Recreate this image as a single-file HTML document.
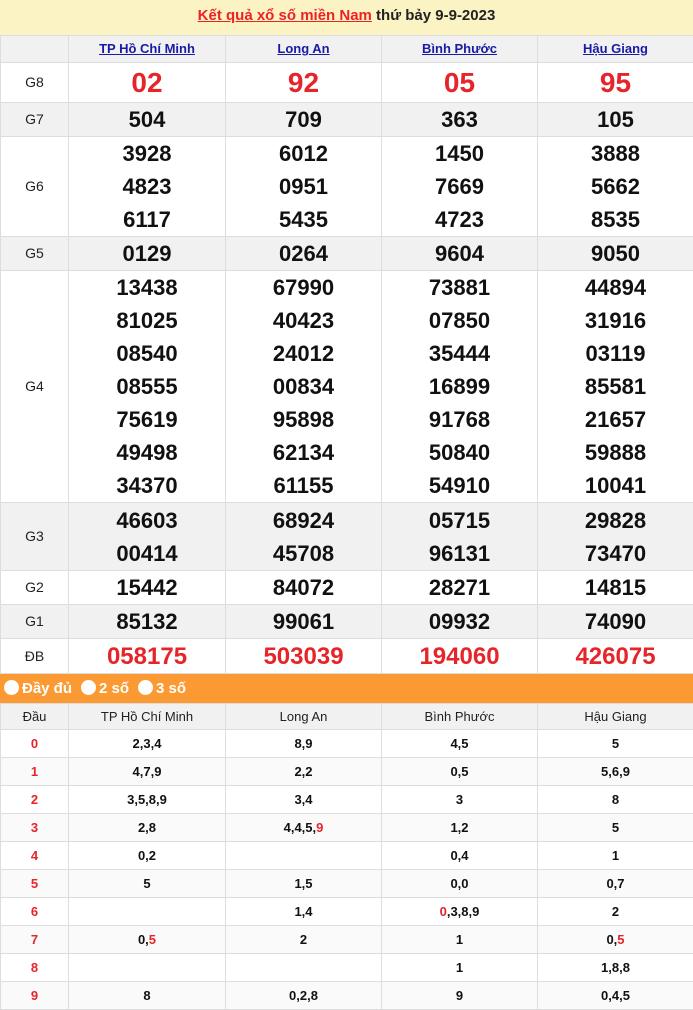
<!DOCTYPE html><html><head><meta charset="utf-8"><style>
*{margin:0;padding:0;box-sizing:border-box}
body{width:693px;height:1008px;overflow:hidden;background:#fff;font-family:"Liberation Sans",Arial,sans-serif}
.hd{height:35px;background:#fcf3c5;text-align:center;font-weight:bold;font-size:15px;line-height:32px;color:#222}
.hd a{color:#e22;text-decoration:underline}
table{border-collapse:collapse;width:693px;table-layout:fixed}
td{border:1px solid #ddd;text-align:center;padding:0;vertical-align:middle}
.k td{font-weight:bold;font-size:22px;color:#111;line-height:33px}
.k td:first-child{font-weight:normal;font-size:14px;color:#222}
.g{background:#f1f1f1}
.th td{height:27px;font-size:13px;line-height:26px}
.th a{color:#1a1aa6;text-decoration:underline}
.r{color:#e5252a!important}
.big td.r{font-size:28px}
.db td.r{font-size:24px}
.bar{height:29px;background:#fb9a33;color:#fff;font-weight:bold;font-size:15px;line-height:29px;padding-left:4px}
.bar span{display:inline-block;width:15px;height:15px;border-radius:50%;background:#fff;vertical-align:-2px;margin-right:3px}
.bar b{margin-right:9px}
.l td{height:28px;font-size:13px;font-weight:bold;color:#111}
.l td:first-child{color:#e5252a;font-weight:bold}
.lh td{height:26px;font-weight:normal;font-size:13px;color:#222;background:#f1f1f1}
.l.x td{background:#fafafa}
.rd{color:#e5252a}
</style></head><body>
<div class="hd"><a>Kết quả xổ số miền Nam</a> thứ bảy 9-9-2023</div>
<table class="k">
<colgroup><col style="width:68px"><col style="width:157px"><col style="width:156px"><col style="width:156px"><col style="width:156px"></colgroup>
<tr class="th g"><td></td><td><a>TP Hồ Chí Minh</a></td><td><a>Long An</a></td><td><a>Bình Phước</a></td><td><a>Hậu Giang</a></td></tr>
<tr class="big" style="height:40px"><td>G8</td><td class="r">02</td><td class="r">92</td><td class="r">05</td><td class="r">95</td></tr>
<tr class="g" style="height:34px"><td>G7</td><td>504</td><td>709</td><td>363</td><td>105</td></tr>
<tr style="height:100px"><td>G6</td><td>3928<br>4823<br>6117</td><td>6012<br>0951<br>5435</td><td>1450<br>7669<br>4723</td><td>3888<br>5662<br>8535</td></tr>
<tr class="g" style="height:34px"><td>G5</td><td>0129</td><td>0264</td><td>9604</td><td>9050</td></tr>
<tr style="height:232px"><td>G4</td><td>13438<br>81025<br>08540<br>08555<br>75619<br>49498<br>34370</td><td>67990<br>40423<br>24012<br>00834<br>95898<br>62134<br>61155</td><td>73881<br>07850<br>35444<br>16899<br>91768<br>50840<br>54910</td><td>44894<br>31916<br>03119<br>85581<br>21657<br>59888<br>10041</td></tr>
<tr class="g" style="height:68px"><td>G3</td><td>46603<br>00414</td><td>68924<br>45708</td><td>05715<br>96131</td><td>29828<br>73470</td></tr>
<tr style="height:34px"><td>G2</td><td>15442</td><td>84072</td><td>28271</td><td>14815</td></tr>
<tr class="g" style="height:34px"><td>G1</td><td>85132</td><td>99061</td><td>09932</td><td>74090</td></tr>
<tr class="db" style="height:35px"><td>ĐB</td><td class="r">058175</td><td class="r">503039</td><td class="r">194060</td><td class="r">426075</td></tr>
</table>
<div class="bar"><span></span><b>Đầy đủ</b><span></span><b>2 số</b><span></span><b>3 số</b></div>
<table>
<colgroup><col style="width:68px"><col style="width:157px"><col style="width:156px"><col style="width:156px"><col style="width:156px"></colgroup>
<tr class="l lh"><td style="color:#222;font-weight:normal">Đầu</td><td>TP Hồ Chí Minh</td><td>Long An</td><td>Bình Phước</td><td>Hậu Giang</td></tr>
<tr class="l"><td>0</td><td>2,3,4</td><td>8,9</td><td>4,5</td><td>5</td></tr>
<tr class="l x"><td>1</td><td>4,7,9</td><td>2,2</td><td>0,5</td><td>5,6,9</td></tr>
<tr class="l"><td>2</td><td>3,5,8,9</td><td>3,4</td><td>3</td><td>8</td></tr>
<tr class="l x"><td>3</td><td>2,8</td><td>4,4,5,<span class="rd">9</span></td><td>1,2</td><td>5</td></tr>
<tr class="l"><td>4</td><td>0,2</td><td></td><td>0,4</td><td>1</td></tr>
<tr class="l x"><td>5</td><td>5</td><td>1,5</td><td>0,0</td><td>0,7</td></tr>
<tr class="l"><td>6</td><td></td><td>1,4</td><td><span class="rd">0</span>,3,8,9</td><td>2</td></tr>
<tr class="l x"><td>7</td><td>0,<span class="rd">5</span></td><td>2</td><td>1</td><td>0,<span class="rd">5</span></td></tr>
<tr class="l"><td>8</td><td></td><td></td><td>1</td><td>1,8,8</td></tr>
<tr class="l x"><td>9</td><td>8</td><td>0,2,8</td><td>9</td><td>0,4,5</td></tr>
</table>
</body></html>
